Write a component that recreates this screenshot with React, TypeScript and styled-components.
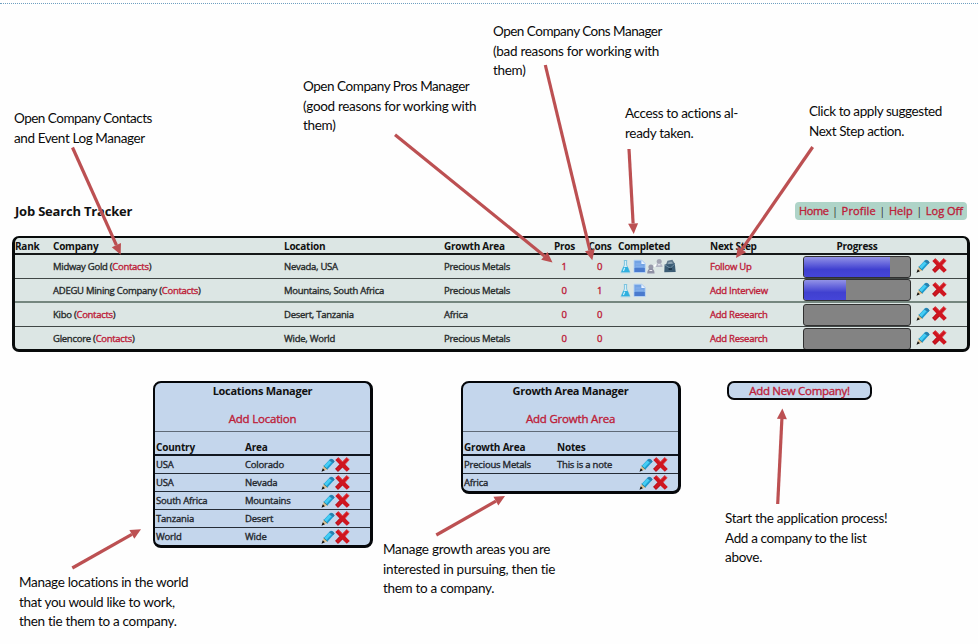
import React from "react";
import styled, { createGlobalStyle } from "styled-components";

const Global = createGlobalStyle`
  * { box-sizing: border-box; }
  body { margin: 0; background: #fff; }
`;

const RED = "#bd2038";
const ARROW = "#bc5052";

const Page = styled.div`
  position: relative;
  width: 978px;
  height: 644px;
  overflow: hidden;
  background: #fefefe;
  font-family: "Open Sans", "Noto Sans", sans-serif;
  color: #222;
  white-space: nowrap;
`;

const TopRule = styled.div`
  height: 4px;
  border-bottom: 1px dotted #6f9fc0;
`;

const Header = styled.header`
  display: flex;
  justify-content: space-between;
  align-items: center;
  height: 18px;
  margin: 198px 11px 16px 15px;
`;

const Title = styled.h1`
  margin: 0;
  font-size: 13px;
  line-height: 18px;
  font-weight: 700;
  letter-spacing: -0.2px;
  color: #111;
`;

const Nav = styled.nav`
  display: flex;
  align-items: center;
  justify-content: space-between;
  width: 172px;
  height: 18px;
  padding: 0 4px;
  border-radius: 4px;
  background: #afd4c8;
  font-size: 11px;
  font-weight: 500;
  line-height: 18px;
  color: #333;
`;

const Link = styled.a<{ $spacing?: number }>`
  color: ${RED};
  letter-spacing: ${(p) => p.$spacing ?? -0.2}px;
  -webkit-text-stroke: 0.35px ${RED};
`;

const Tracker = styled.section`
  width: 958px;
  height: 116px;
  margin-left: 12px;
  border: 3px solid #080b0b;
  border-top-width: 2px;
  border-radius: 7px;
  background: #dce6e4;
  overflow: hidden;
`;

const TrackerRow = styled.div<{ $head?: boolean; $heavy?: boolean; $height: number }>`
  display: grid;
  grid-template-columns: 38px 231px 160px 102px 36px 35px 93px 93px 108px 1fr;
  align-items: center;
  height: ${(p) => p.$height}px;
  font-size: ${(p) => (p.$head ? 10 : 9.5)}px;
  font-weight: ${(p) => (p.$head ? 700 : 500)};
  letter-spacing: ${(p) => (p.$head ? -0.24 : -0.26)}px;
  color: ${(p) => (p.$head ? "#111" : "#262a2a")};
  -webkit-text-stroke: ${(p) => (p.$head ? "0" : "0.35px #262a2a")};
  border-bottom: ${(p) => (p.$head ? "2px solid #151818" : p.$heavy ? "2px solid #75877f" : "1px solid #414746")};
  &:last-child { border-bottom: 0; }
`;

const Cell = styled.div<{ $center?: boolean; $indent?: number }>`
  padding-left: ${(p) => p.$indent ?? 0}px;
  text-align: ${(p) => (p.$center ? "center" : "left")};
`;

const IconStrip = styled.div`
  display: flex;
  align-items: center;
  gap: 1px;
  padding-left: 2px;
`;

const Bar = styled.div`
  height: 22px;
  border: 1px solid #303030;
  border-radius: 3px;
  background: #838383;
  overflow: hidden;
`;

const Fill = styled.div`
  height: 100%;
  background: linear-gradient(#9292e6 0%, #6a6add 30%, #4040d0 62%, #4545d8 100%);
`;

const Actions = styled.div<{ $wide?: boolean }>`
  display: flex;
  align-items: center;
  gap: ${(p) => (p.$wide ? 2 : 0)}px;
  padding-left: ${(p) => (p.$wide ? 5 : 1)}px;
  padding-bottom: ${(p) => (p.$wide ? 2 : 0)}px;
  svg { display: block; }
`;

const Managers = styled.div`
  display: flex;
  align-items: flex-start;
  margin: 29px 0 0 153px;
`;

const Panel = styled.section<{ $gap: number }>`
  width: 220px;
  margin-right: ${(p) => p.$gap}px;
  border: solid #05070a;
  border-width: 2px 3px 3px 2px;
  border-radius: 8px;
  background: #c4d6ec;
  overflow: hidden;
`;

const PanelTitle = styled.h2`
  margin: 0;
  height: 16px;
  font-size: 11px;
  line-height: 16px;
  font-weight: 700;
  letter-spacing: -0.28px;
  text-align: center;
  color: #111;
`;

const PanelAdd = styled.div`
  height: 33px;
  padding-top: 11px;
  border-bottom: 1px solid #5f6a77;
  font-size: 11.5px;
  line-height: 17px;
  text-align: center;
`;

const PanelRow = styled.div<{ $head?: boolean; $second: number; $actions: number }>`
  display: grid;
  grid-template-columns: ${(p) => `${p.$second}px ${p.$actions}px 1fr`};
  align-items: center;
  height: ${(p) => (p.$head ? 24 : 18)}px;
  padding: ${(p) => (p.$head ? "7px 0 0 1px" : "0 0 0 1px")};
  font-size: ${(p) => (p.$head ? 10 : 9.5)}px;
  font-weight: ${(p) => (p.$head ? 700 : 500)};
  letter-spacing: ${(p) => (p.$head ? -0.2 : -0.2)}px;
  color: ${(p) => (p.$head ? "#111" : "#23272d")};
  -webkit-text-stroke: ${(p) => (p.$head ? "0" : "0.35px #23272d")};
  border-bottom: ${(p) => (p.$head ? "2px solid #111720" : "1px solid #252c36")};
  &:last-child { border-bottom: 0; height: 17px; }
`;

const AddButton = styled.button`
  width: 145px;
  height: 19px;
  padding: 0;
  border: 2.5px solid #05070a;
  border-radius: 7px;
  background: #c4d6ec;
  font: 500 11.5px/14px "Open Sans", sans-serif;
`;

const Overlay = styled.svg`
  position: absolute;
  inset: 0;
  pointer-events: none;
`;

const Note = styled.p<{ $x: number; $y: number }>`
  position: absolute;
  left: ${(p) => p.$x}px;
  top: ${(p) => p.$y}px;
  margin: 0;
  font: 13.5px/19.5px Lato, sans-serif;
  color: #0a0a0a;
`;

const NoteLine = styled.span<{ $spacing: number }>`
  display: block;
  letter-spacing: ${(p) => p.$spacing}px;
`;

const Pencil = () => (
  <svg width="14" height="14" viewBox="0 0 14 14">
    <path d="M2.6 8 9.2 1Q11.6-.2 13.6 3.6L6.4 11.4Z" fill="#1b9cd0" />
    <path d="M3.2 7.9 9.4 1.3 11.8 3.1 5.3 9.9Z" fill="#45cdf4" />
    <path d="M9.1 1.4Q11.7-.2 13.6 3.5L12.2 5 8 2.6Z" fill="#2a7fac" />
    <path d="M2.6 8 6.4 11.4 1 13.3Z" fill="#dfc393" />
    <path d="M1.8 10.3 3.9 12.2.5 13.8Z" fill="#111" />
    <path d="M2.6 8 6.4 11.4" stroke="#28606f" strokeWidth=".7" />
  </svg>
);

const Cross = () => (
  <svg width="15" height="15" viewBox="0 0 15 15">
    <path d="M.3 3 3.4.3 7.5 4.6 11.7.3 14.5 2.8 10.4 7.4 14.8 12 11.8 14.8 7.4 10.5 3.1 14.8.2 12 4.5 7.5Z" fill="#cf1620" />
    <path d="M3.4.7 7.5 5 11.6.7 14 2.9 10 7" fill="none" stroke="#e4575b" strokeWidth=".8" />
    <path d="M4.7 7.5.6 12l2.5 2.4 4.3-4.4" fill="none" stroke="#a50c18" strokeWidth=".7" />
  </svg>
);

const Flask = () => (
  <svg width="13" height="15" viewBox="0 0 13 15">
    <path d="M4.8 1.5h3.4M5.4 2v4L2.2 13h8.6L7.6 6V2" fill="#d6eff9" stroke="#7cc4df" strokeWidth="1" />
    <path d="M4.3 8h4.4l2 5.2H2.3Z" fill="#2fb0df" />
    <path d="M5.7 8.8 4.4 12" stroke="#c9f3ff" strokeWidth="1.2" />
    <path d="M1.6 13.7h9.7" stroke="#91cce3" />
  </svg>
);

const Document = () => (
  <svg width="13" height="15" viewBox="0 0 13 15">
    <path d="M1 1.2h7.8l3.4 3.3v9H1Z" fill="#72a3e4" stroke="#b6d2f4" strokeWidth=".9" />
    <path d="M8.4 1.2v3.7h3.8Z" fill="#e9f3ff" />
    <path d="M2.5 5h5.2M2.5 7.2h8" stroke="#8db5ef" strokeWidth=".9" />
    <path d="M1.5 9h10.3v4H1.5Z" fill="#4a7bce" />
  </svg>
);

const People = () => (
  <svg width="16" height="15" viewBox="0 0 16 15">
    <circle cx="12.2" cy="2.6" r="2.5" fill="#a3a5b3" />
    <path d="M8.9 8q.2-3.8 3.3-3.8T15.6 8Z" fill="#b4b7c5" />
    <path d="m6.6 7.7 2.6-2.3" stroke="#fafcfc" strokeWidth="1.6" />
    <circle cx="3.9" cy="8" r="2.5" fill="#9799aa" />
    <path d="M.2 14.4q.2-4.8 3.7-4.8t3.7 4.8Z" fill="#8f91a5" />
    <path d="M2.5 11.5h2.7M11 5.7h2.4" stroke="#efeff5" strokeWidth="1.1" />
  </svg>
);

const Briefcase = () => (
  <svg width="12" height="15" viewBox="0 0 12 15">
    <path d="M2.5 6.2 4 2.4 8 1.7l2.4 3.8" fill="#8ea5b4" stroke="#60798c" strokeWidth="1.5" />
    <path d="m.6 5.6 10.2-1 .9 8.3-11.4.4Z" fill="#3b5c74" />
    <path d="m.9 5.9 5.3 3.3 4.6-4.1" fill="none" stroke="#6f8da2" strokeWidth="1" />
    <path d="M4.6 10h3.3" stroke="#0c2235" strokeWidth="1.3" />
  </svg>
);

type Company = {
  name: string;
  location: string;
  area: string;
  pros: number;
  cons: number;
  next: string;
  progress: number;
  icons: React.FC[];
  height: number;
};

const companies: Company[] = [
  { name: "Midway Gold", location: "Nevada, USA", area: "Precious Metals", pros: 1, cons: 0, next: "Follow Up", progress: 81, icons: [Flask, Document, People, Briefcase], height: 24 },
  { name: "ADEGU Mining Company", location: "Mountains, South Africa", area: "Precious Metals", pros: 0, cons: 1, next: "Add Interview", progress: 40, icons: [Flask, Document], height: 24 },
  { name: "Kibo", location: "Desert, Tanzania", area: "Africa", pros: 0, cons: 0, next: "Add Research", progress: 0, icons: [], height: 24 },
  { name: "Glencore", location: "Wide, World", area: "Precious Metals", pros: 0, cons: 0, next: "Add Research", progress: 0, icons: [], height: 23 },
];

const locations = [
  ["USA", "Colorado"],
  ["USA", "Nevada"],
  ["South Africa", "Mountains"],
  ["Tanzania", "Desert"],
  ["World", "Wide"],
];

const growthAreas = [
  ["Precious Metals", "This is a note"],
  ["Africa", ""],
];

type NoteData = { x: number; y: number; lines: [string, number][] };

const notes: NoteData[] = [
  { x: 14, y: 109, lines: [["Open Company Contacts", -0.5], ["and Event Log Manager", -0.4]] },
  { x: 303, y: 77, lines: [["Open Company Pros Manager", -0.45], ["(good reasons for working with", -0.32], ["them)", -0.3]] },
  { x: 493, y: 22, lines: [["Open Company Cons Manager", -0.5], ["(bad reasons for working with", -0.3], ["them)", -0.3]] },
  { x: 625, y: 104, lines: [["Access to actions al-", -0.36], ["ready taken.", -0.3]] },
  { x: 809, y: 102, lines: [["Click to apply suggested", -0.42], ["Next Step action.", -0.4]] },
  { x: 19, y: 573, lines: [["Manage locations in the world", -0.3], ["that you would like to work,", -0.3], ["then tie them to a company.", -0.3]] },
  { x: 383, y: 540, lines: [["Manage growth areas you are", -0.27], ["interested in pursuing, then tie", -0.27], ["them to a company.", -0.3]] },
  { x: 725, y: 509, lines: [["Start the application process!", -0.3], ["Add a company to the list", -0.36], ["above.", -0.3]] },
];

const arrows = [
  [72.5, 147.5, 120.7, 254.7],
  [395, 134.7, 552.5, 262.5],
  [545.3, 65, 592.3, 260.3],
  [629, 149, 633.7, 234],
  [812.7, 147, 736, 258],
  [72.3, 568, 141, 529.3],
  [436.3, 535, 505, 496],
  [777.7, 504, 782.4, 408.5],
];

const Arrow = ({ points: [x1, y1, x2, y2] }: { points: number[] }) => {
  const length = Math.hypot(x2 - x1, y2 - y1);
  const ux = (x2 - x1) / length;
  const uy = (y2 - y1) / length;
  const bx = x2 - ux * 10.5;
  const by = y2 - uy * 10.5;
  return (
    <g>
      <line x1={x1} y1={y1} x2={bx} y2={by} stroke={ARROW} strokeWidth="3.2" />
      <polygon points={`${x2},${y2} ${bx - uy * 5},${by + ux * 5} ${bx + uy * 5},${by - ux * 5}`} fill={ARROW} />
    </g>
  );
};

const RowActions = ({ wide }: { wide?: boolean }) => (
  <Actions $wide={wide}>
    <Pencil />
    <Cross />
  </Actions>
);

const Manager = ({ title, add, heads, rows, second, actions, gap }: {
  title: string; add: string; heads: string[]; rows: string[][]; second: number; actions: number; gap: number;
}) => (
  <Panel $gap={gap}>
    <PanelTitle>{title}</PanelTitle>
    <PanelAdd><Link>{add}</Link></PanelAdd>
    <PanelRow $head $second={second} $actions={actions}>
      <Cell>{heads[0]}</Cell>
      <Cell>{heads[1]}</Cell>
    </PanelRow>
    {rows.map((row, i) => (
      <PanelRow key={i} $second={second} $actions={actions}>
        <Cell>{row[0]}</Cell>
        <Cell>{row[1]}</Cell>
        <RowActions />
      </PanelRow>
    ))}
  </Panel>
);

export default function App() {
  return (
    <Page>
      <Global />
      <TopRule />
      <Header>
        <Title>Job Search Tracker</Title>
        <Nav>
          <Link $spacing={-0.4}>Home</Link>|<Link $spacing={0.15}>Profile</Link>|<Link $spacing={0}>Help</Link>|<Link $spacing={0}>Log Off</Link>
        </Nav>
      </Header>
      <Tracker>
        <TrackerRow $head $height={17}>
          <Cell>Rank</Cell>
          <Cell>Company</Cell>
          <Cell>Location</Cell>
          <Cell>Growth Area</Cell>
          <Cell $center $indent={1}>Pros</Cell>
          <Cell $center $indent={1}>Cons</Cell>
          <Cell $indent={1}>Completed</Cell>
          <Cell>Next Step</Cell>
          <Cell $center>Progress</Cell>
        </TrackerRow>
        {companies.map((c, i) => (
          <TrackerRow key={c.name} $height={c.height} $heavy={i === 1}>
            <Cell />
            <Cell>{c.name} (<Link $spacing={-0.3}>Contacts</Link>)</Cell>
            <Cell>{c.location}</Cell>
            <Cell>{c.area}</Cell>
            <Cell $center><Link>{c.pros}</Link></Cell>
            <Cell $center><Link>{c.cons}</Link></Cell>
            <IconStrip>{c.icons.map((Icon, n) => <Icon key={n} />)}</IconStrip>
            <Cell><Link $spacing={-0.25}>{c.next}</Link></Cell>
            <Bar><Fill style={{ width: `${c.progress}%` }} /></Bar>
            <RowActions wide />
          </TrackerRow>
        ))}
      </Tracker>
      <Managers>
        <Manager title="Locations Manager" add="Add Location" heads={["Country", "Area"]} rows={locations} second={89} actions={75} gap={88} />
        <Manager title="Growth Area Manager" add="Add Growth Area" heads={["Growth Area", "Notes"]} rows={growthAreas} second={93} actions={81} gap={46} />
        <AddButton><Link $spacing={-0.3}>Add New Company!</Link></AddButton>
      </Managers>
      {notes.map((note) => (
        <Note key={note.lines[0][0]} $x={note.x} $y={note.y}>
          {note.lines.map(([text, spacing]) => <NoteLine key={text} $spacing={spacing}>{text}</NoteLine>)}
        </Note>
      ))}
      <Overlay width="978" height="644" viewBox="0 0 978 644">
        {arrows.map((points, i) => <Arrow key={i} points={points} />)}
      </Overlay>
    </Page>
  );
}
